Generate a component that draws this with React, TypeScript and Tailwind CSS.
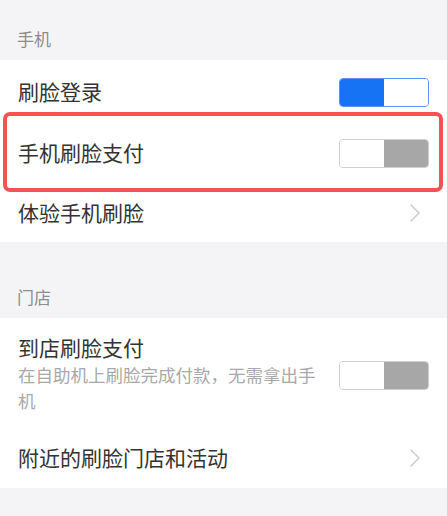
import type { ReactNode } from 'react';

const FONT = '"Noto Sans CJK SC", "Noto Sans", sans-serif';

const Toggle = ({ on }: { on: boolean }) =>
  on ? (
    <div className="flex h-[29px] w-[90px] overflow-hidden rounded-[4px] border border-[#5b93ee]">
      <div className="w-1/2 bg-[#1673f3]" />
      <div className="w-1/2 bg-white" />
    </div>
  ) : (
    <div className="flex h-[29px] w-[90px] overflow-hidden rounded-[4px] border border-[#cfcfcf]">
      <div className="w-1/2 bg-white" />
      <div className="w-1/2 bg-[#a7a7a7]" />
    </div>
  );

const Chevron = () => (
  <svg width="12" height="20" viewBox="0 0 12 20" fill="none" className="mr-[8px]">
    <path d="M2 2l8 8-8 8" stroke="#cccccc" strokeWidth="1.5" strokeLinecap="round" strokeLinejoin="round" />
  </svg>
);

const SectionLabel = ({ children, className }: { children: ReactNode; className: string }) => (
  <div className={`px-[17px] text-[17px] text-[#8d8d8d] ${className}`}>{children}</div>
);

const Row = ({ title, right, className = '' }: { title: string; right: ReactNode; className?: string }) => (
  <div className={`flex items-center justify-between pl-[18px] pr-[18px] ${className}`}>
    <span className="text-[21px] text-[#333333]">{title}</span>
    {right}
  </div>
);

export default function App() {
  return (
    <div className="h-[516px] w-[447px] overflow-hidden bg-[#f4f4f6]" style={{ fontFamily: FONT }}>
      <SectionLabel className="pt-[27px] pb-[10px] leading-[23px]">手机</SectionLabel>

      <div className="bg-white">
        <Row title="刷脸登录" right={<Toggle on />} className="h-[62px] pt-[2px]" />
        <div className="relative">
          <div className="pointer-events-none absolute -top-[10px] -bottom-[8px] left-[3px] right-[4px] rounded-[7px] border-[4px] border-[#f55353]" />
          <Row title="手机刷脸支付" right={<Toggle on={false} />} className="h-[62px]" />
        </div>
        <Row title="体验手机刷脸" right={<Chevron />} className="h-[58px]" />
      </div>

      <SectionLabel className="pt-[44px] pb-[10px] leading-[22px]">门店</SectionLabel>

      <div className="bg-white">
        <div className="flex items-center justify-between px-[18px] pt-[15px] pb-[17px]">
          <div className="w-[310px]">
            <div className="text-[21px] leading-[28px] text-[#333333]">到店刷脸支付</div>
            <div className="mt-[1px] text-[17.5px] leading-[26px] text-[#a9a9a9]">
              在自助机上刷脸完成付款，无需拿出手机
            </div>
          </div>
          <div className="mt-[4px]">
            <Toggle on={false} />
          </div>
        </div>
        <Row title="附近的刷脸门店和活动" right={<Chevron />} className="h-[57px] pb-[3px]" />
      </div>
    </div>
  );
}
